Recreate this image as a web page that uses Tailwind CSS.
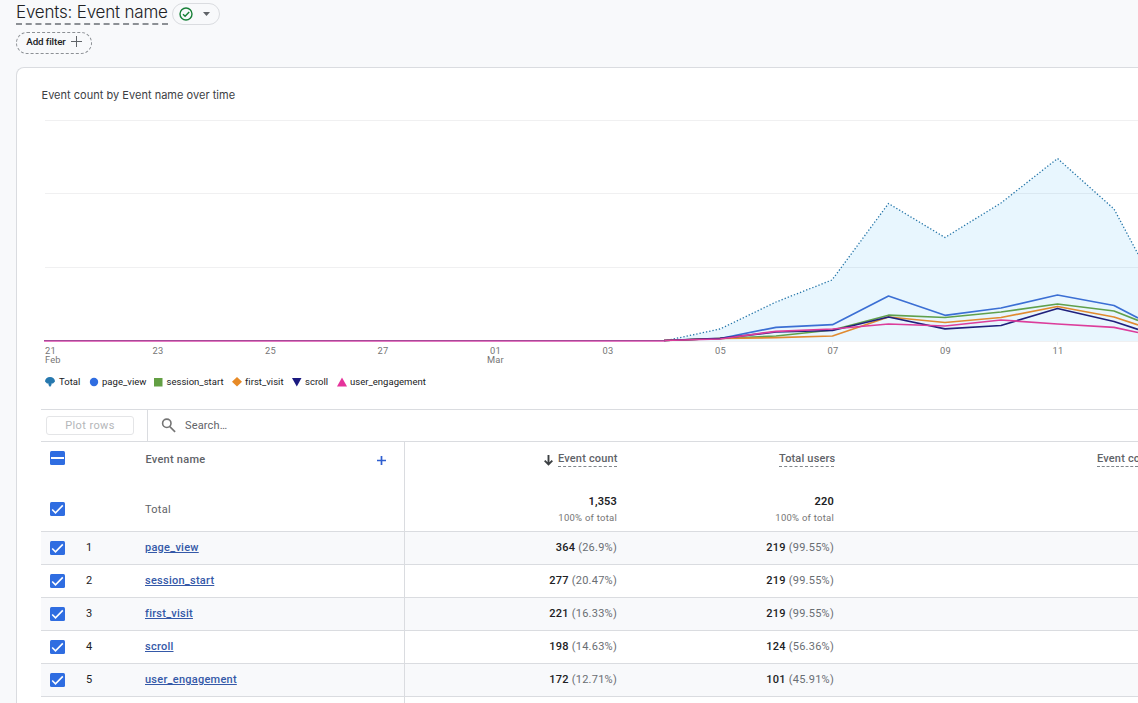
<!DOCTYPE html>
<html lang="en">
<head>
  <meta charset="UTF-8">
  <meta name="viewport" content="width=device-width, initial-scale=1.0">
  <title>Events: Event name</title>
  <script src="https://cdn.jsdelivr.net/npm/@tailwindcss/browser@4"></script>
</head>

<body class="h-screen overflow-hidden bg-[#f8f9fb] font-[Roboto,sans-serif] text-[#202124]">

<!-- Shared icons -->
<svg class="hidden">
  <symbol id="checked" viewBox="0 0 15 14">
    <rect width="15" height="14" rx="1.5" fill="#2f6de1"/>
    <path d="M2.2 7.5 5.5 10.800 12.800 3.400" fill="none" stroke="#fff" stroke-width="1.600"/>
  </symbol>
</svg>

<!-- Header -->
<header class="flex h-[67px] flex-col items-start pl-4">
  <div class="flex h-[28px] items-start gap-1">
    <h1 class="mt-[1px] h-[24px] w-[152px] whitespace-nowrap border-b-2 border-dashed border-[#8c9095] font-['Inter'] text-[17px] leading-[22px] font-light tracking-[-0.2px] text-[#202124]">Events: Event name</h1>
    <button class="mt-[3px] flex h-[22px] w-[48px] items-center gap-[10px] rounded-full border border-[#dadce0] pl-[6px]">
      <svg class="size-[14px]" viewBox="0 0 14 14" fill="none" stroke="#188038" stroke-width="1.400"><circle cx="7" cy="7" r="6"/><path d="m4 7.200 2.100 2.100L10.200 5"/></svg>
      <svg class="h-[4px] w-[7px]" viewBox="0 0 7 4"><path d="M0 0h7L3.500 4z" fill="#5f6368"/></svg>
    </button>
  </div>
  <button class="mt-[4px] flex h-[22px] w-[76px] items-center gap-[5px] rounded-full border border-dashed border-[#8c9095] pl-[9px] text-[9.8px] font-medium whitespace-nowrap">
    <span class="mb-px w-[40px] tracking-[-0.1px]">Add filter</span>
    <svg class="mb-[3px] size-[11px] shrink-0" viewBox="0 0 11 11" stroke="#5f6368"><path d="M5.500 0v11M0 5.500h11"/></svg>
  </button>
</header>

<!-- Card -->
<main class="ml-4 h-[660px] overflow-hidden rounded-tl-lg border border-r-0 border-[#dadce0] bg-white pl-6">
  <h2 class="h-[52px] pt-[19px] pl-[0.500px] font-['Inter'] text-[11px] leading-[16px] tracking-[0.02px] text-[#3c4043]">Event count by Event name over time</h2>

  <!-- Chart -->
  <svg class="ml-[3px] block h-[248px] w-[1094px]" viewBox="44 120 1094 248" fill="none">
    <g stroke="#f0f0f1">
      <path d="M45 120.500H1138M45 193.500H1138M45 267.500H1138M45 341.500H1138"/>
      <path d="M720.500 341v4M832.500 341v4M945.500 341v4M1057.500 341v4"/>
    </g>
    <path d="M664 341 720 329 776 302 832 280 888.500 203.500 945 237.500 1001 203 1057.500 158.500 1114 209 1138 254V341z" fill="#40b4f8" fill-opacity=".12"/>
    <path d="M664 341 720 329 776 302 832 280 888.500 203.500 945 237.500 1001 203 1057.500 158.500 1114 209 1138 254" stroke="#2475a8" stroke-width="1.300" stroke-dasharray="1.300 2"/>
    <g stroke-width="1.700" stroke-linejoin="round">
      <path d="M664 340.500 720 338.500 776 327.300 832.500 324.700 888.500 296 945 315.300 1001 308 1057.500 295 1114 305.500 1138 318" stroke="#3b6fd4"/>
      <path d="M664 340.500 720 338.500 776 336 832.500 330 888.500 315.200 945 317.500 1001 312 1057.500 304 1114 311 1138 320.500" stroke="#60a04c"/>
      <path d="M664 340.500 720 338.500 776 337.700 832.500 336 888.500 317 945 322.500 1001 317.500 1057.500 306.500 1114 317 1138 325" stroke="#e08a30"/>
      <path d="M664 340.500 720 338.300 776 332 832.500 330.500 888.500 317 945 328.800 1001 325.500 1057.500 308.500 1114 321.500 1138 329.500" stroke="#20207c"/>
      <path d="M664 340.500 720 339 776 331.300 832.500 329 888.500 324 945 326 1001 320 1057.500 324 1114 327.300 1138 332.500" stroke="#dc3d9b"/>
    </g>
    <path d="M44 340.500H665" stroke="#9a4a94" stroke-width="1"/>
    <path d="M44 341.300H665" stroke="#e04aae" stroke-width=".9"/>
    <g fill="#757575" font-size="9.300" letter-spacing=".2">
      <text x="45" y="354">21</text>
      <text x="45" y="363">Feb</text>
      <g text-anchor="middle">
        <text x="158" y="354">23</text>
        <text x="270.500" y="354">25</text>
        <text x="383" y="354">27</text>
        <text x="495.500" y="354">01</text>
        <text x="495.500" y="363">Mar</text>
        <text x="608" y="354">03</text>
        <text x="720.500" y="354">05</text>
        <text x="833" y="354">07</text>
        <text x="945.500" y="354">09</text>
        <text x="1058" y="354">11</text>
      </g>
    </g>
  </svg>

  <!-- Legend -->
  <ul class="ml-[4px] flex h-[41px] items-start pt-[7px] text-[9.5px] leading-[13px] tracking-[0.02px] whitespace-nowrap text-[#202124]">
    <li class="flex w-[44px] items-center gap-[4px]"><svg class="size-[10px]" viewBox="0 0 10 10" fill="#2678ae"><path d="M0 4.500A5 4.500 0 0 1 10 4.500L8 6.500H6.500V8L5 10 3.500 8V6.500H2z"/></svg>Total</li>
    <li class="flex w-[64px] items-center gap-[3px]"><svg class="size-[10px]" viewBox="0 0 10 10" fill="#2f6de1"><circle cx="5" cy="5" r="4.200"/></svg>page_view</li>
    <li class="flex w-[78.5px] items-center gap-[3.5px]"><svg class="size-[10px]" viewBox="0 0 10 10" fill="#639f43"><path d="M1 1h8.500v8.500H1z"/></svg>session_start</li>
    <li class="flex w-[60px] items-center gap-[3.5px]"><svg class="size-[10px]" viewBox="0 0 10 10" fill="#e78a26"><path d="m5 0 5 4.800-5 4.800-5-4.800z"/></svg>first_visit</li>
    <li class="flex w-[45px] items-center gap-[3.5px]"><svg class="size-[10px]" viewBox="0 0 10 10" fill="#1b1a80"><path d="M0 1h9.500L4.800 9.500z"/></svg>scroll</li>
    <li class="flex items-center gap-[3.5px]"><svg class="size-[10px]" viewBox="0 0 10 10" fill="#e5339b"><path d="M0 9.500h10L5 .500z"/></svg>user_engagement</li>
  </ul>

  <!-- Table toolbar -->
  <div class="flex h-[33px] items-center border-y border-[#dadce0]">
    <div class="flex h-full w-[107px] items-center border-r border-[#dadce0] pl-[5px]">
      <button class="h-[19px] w-[88px] rounded-[3px] border border-[#e4e5e7] text-[11px] leading-[17px] tracking-[0.4px] text-[#b4b6b9]">Plot rows</button>
    </div>
    <svg class="ml-[13px] size-[15px]" viewBox="0 0 15 15" fill="none" stroke="#757575" stroke-width="1.600"><circle cx="5.800" cy="5.300" r="4.200"/><path d="m8.800 8.600 5.300 5.300"/></svg>
    <span class="mt-px ml-[9px] text-[11px] leading-[16px] tracking-[0.15px] text-[#5f6368]">Search…</span>
  </div>

  <!-- Table head -->
  <div class="flex h-[43px] text-[11px] font-medium tracking-[0.17px] whitespace-nowrap text-[#5f6368]">
    <div class="flex w-[364px] shrink-0 items-start border-r border-[#dadce0] pl-[9px]">
      <svg class="mt-[9px] h-[14px] w-[15px]" viewBox="0 0 15 14"><rect width="15" height="14" rx="1.500" fill="#2f6de1"/><path d="M1 7h13" stroke="#fff" stroke-width="2"/></svg>
      <span class="mt-[10px] ml-[80px] w-[232px] pl-[0.5px] leading-[16px] tracking-[0.25px]">Event name</span>
      <svg class="mt-[14px] size-[9px]" viewBox="0 0 9 9" stroke="#2f5fd0" stroke-width="1.700"><path d="M4.500 0v9M0 4.500h9"/></svg>
    </div>
    <div class="flex w-[212px] shrink-0 items-start justify-end gap-[5px] pt-[9px]">
      <svg class="mt-[4px] h-[11px] w-[9px]" viewBox="0 0 9 11" fill="none" stroke="#3c4043" stroke-width="1.900"><path d="M4.500 0v9.500M.700 5.700l3.800 3.800 3.800-3.800"/></svg>
      <span class="h-[16px] w-[59px] border-b border-dashed border-[#80868b] leading-[16px]">Event count</span>
    </div>
    <div class="flex w-[217px] shrink-0 justify-end pt-[9px]">
      <span class="h-[16px] w-[55px] border-b border-dashed border-[#80868b] leading-[16px]">Total users</span>
    </div>
    <div class="min-w-0 grow pt-[9px] pl-[263px]">
      <span class="block h-[16px] overflow-hidden border-b border-dashed border-[#80868b] leading-[16px]">Event count</span>
    </div>
  </div>

  <!-- Totals -->
  <div class="flex h-[47px] border-b border-[#dadce0] text-[11px] tracking-[0.25px] whitespace-nowrap">
    <div class="flex w-[364px] items-start border-r border-[#dadce0] pl-[9px]">
      <svg class="mt-[17px] h-[14px] w-[15px]"><use href="#checked"/></svg>
      <span class="mt-[17px] ml-[80px] leading-[16px] text-[#5f6368]">Total</span>
    </div>
    <div class="w-[212px] pt-[9px] text-right">
      <p class="leading-[16px] font-semibold tracking-[0.15px]">1,353</p>
      <p class="text-[9.5px] leading-[16px] text-[#757575]">100% of total</p>
    </div>
    <div class="w-[217px] pt-[9px] text-right">
      <p class="leading-[16px] font-semibold">220</p>
      <p class="text-[9.5px] leading-[16px] text-[#757575]">100% of total</p>
    </div>
  </div>

  <!-- Rows -->
  <div class="text-[11px] tracking-[0.25px] whitespace-nowrap">
    <div class="flex h-[33px] border-b border-[#dadce0] bg-[#f8f9fb] leading-[31px]">
      <div class="flex w-[364px] border-r border-[#dadce0] pl-[9px]">
        <svg class="mt-[9px] h-[14px] w-[15px]"><use href="#checked"/></svg>
        <span class="ml-[21px] w-[59px]">1</span>
        <a class="font-medium text-[#3559a8] underline">page_view</a>
      </div>
      <div class="w-[212px] text-right"><b class="font-medium">364</b> <span class="text-[#6a6e73]">(26.9%)</span></div>
      <div class="w-[217px] text-right"><b class="font-medium">219</b> <span class="text-[#6a6e73]">(99.55%)</span></div>
    </div>
    <div class="flex h-[33px] border-b border-[#dadce0] leading-[31px]">
      <div class="flex w-[364px] border-r border-[#dadce0] pl-[9px]">
        <svg class="mt-[9px] h-[14px] w-[15px]"><use href="#checked"/></svg>
        <span class="ml-[21px] w-[59px]">2</span>
        <a class="font-medium text-[#3559a8] underline">session_start</a>
      </div>
      <div class="w-[212px] text-right"><b class="font-medium">277</b> <span class="text-[#6a6e73]">(20.47%)</span></div>
      <div class="w-[217px] text-right"><b class="font-medium">219</b> <span class="text-[#6a6e73]">(99.55%)</span></div>
    </div>
    <div class="flex h-[33px] border-b border-[#dadce0] bg-[#f8f9fb] leading-[31px]">
      <div class="flex w-[364px] border-r border-[#dadce0] pl-[9px]">
        <svg class="mt-[9px] h-[14px] w-[15px]"><use href="#checked"/></svg>
        <span class="ml-[21px] w-[59px]">3</span>
        <a class="font-medium text-[#3559a8] underline">first_visit</a>
      </div>
      <div class="w-[212px] text-right"><b class="font-medium">221</b> <span class="text-[#6a6e73]">(16.33%)</span></div>
      <div class="w-[217px] text-right"><b class="font-medium">219</b> <span class="text-[#6a6e73]">(99.55%)</span></div>
    </div>
    <div class="flex h-[33px] border-b border-[#dadce0] leading-[31px]">
      <div class="flex w-[364px] border-r border-[#dadce0] pl-[9px]">
        <svg class="mt-[9px] h-[14px] w-[15px]"><use href="#checked"/></svg>
        <span class="ml-[21px] w-[59px]">4</span>
        <a class="font-medium text-[#3559a8] underline">scroll</a>
      </div>
      <div class="w-[212px] text-right"><b class="font-medium">198</b> <span class="text-[#6a6e73]">(14.63%)</span></div>
      <div class="w-[217px] text-right"><b class="font-medium">124</b> <span class="text-[#6a6e73]">(56.36%)</span></div>
    </div>
    <div class="flex h-[33px] border-b border-[#dadce0] bg-[#f8f9fb] leading-[31px]">
      <div class="flex w-[364px] border-r border-[#dadce0] pl-[9px]">
        <svg class="mt-[9px] h-[14px] w-[15px]"><use href="#checked"/></svg>
        <span class="ml-[21px] w-[59px]">5</span>
        <a class="font-medium text-[#3559a8] underline">user_engagement</a>
      </div>
      <div class="w-[212px] text-right"><b class="font-medium">172</b> <span class="text-[#6a6e73]">(12.71%)</span></div>
      <div class="w-[217px] text-right"><b class="font-medium">101</b> <span class="text-[#6a6e73]">(45.91%)</span></div>
    </div>
    <div class="h-[33px] w-[364px] border-r border-[#dadce0]"></div>
  </div>
</main>

</body>
</html>
